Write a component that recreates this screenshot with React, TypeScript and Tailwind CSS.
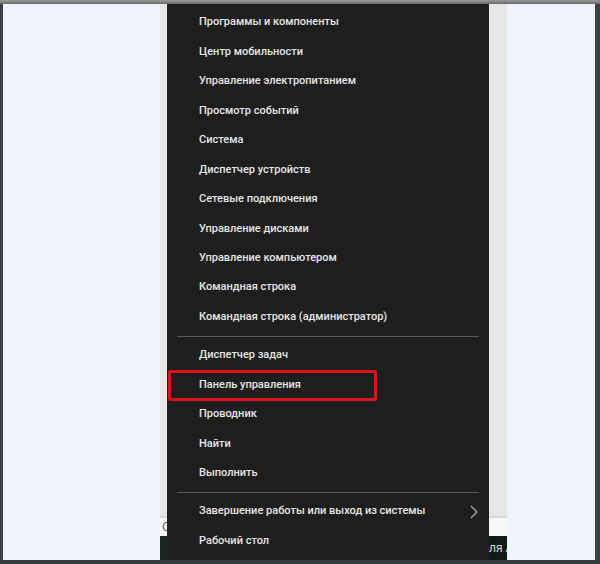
import React from "react";

const group1 = [
  "Программы и компоненты",
  "Центр мобильности",
  "Управление электропитанием",
  "Просмотр событий",
  "Система",
  "Диспетчер устройств",
  "Сетевые подключения",
  "Управление дисками",
  "Управление компьютером",
  "Командная строка",
  "Командная строка (администратор)",
];
const group2 = ["Диспетчер задач", "Панель управления", "Проводник", "Найти", "Выполнить"];

function Item({ label, highlight, chevron }: { label: string; highlight?: boolean; chevron?: boolean }) {
  return (
    <div className="relative h-[29.45px] flex items-center pl-[32px] pr-[10px] text-[11px] font-medium text-[#e6e6e6]">
      <span className="flex-1 whitespace-nowrap">{label}</span>
      {chevron && (
        <svg width="8" height="14" viewBox="0 0 8 14" className="mr-[1px]">
          <path d="M1 1 L7 7 L1 13" fill="none" stroke="#a8a8a8" strokeWidth="1.3" />
        </svg>
      )}
      {highlight && (
        <div className="absolute left-[1px] top-[0px] w-[209px] h-[31px] border-[3px] border-[#e0101c] rounded-[2px]" />
      )}
    </div>
  );
}

function Sep() {
  return <div className="h-[9px] flex items-center px-[10px]"><div className="h-px w-full bg-[#5a5a5a]" /></div>;
}

export default function App() {
  return (
    <div
      className="w-[600px] h-[564px] bg-[#3c3f42] flex flex-col"
      style={{ fontFamily: 'Roboto, "Noto Sans", sans-serif' }}
    >
      <div className="h-[4px] bg-gradient-to-b from-[#9a9a9a] to-[#6a6a6a]" />
      <div className="flex-1 flex min-h-0 pl-[3px] pr-[5px]">
        <div className="w-[157px] bg-[#eff4fc]" />
        <div className="w-[7px] flex flex-col">
          <div className="flex-1 bg-[#e6e6e6]" />
          <div className="h-[2px] bg-[#d8d8d8]" />
          <div className="h-[18px] bg-[#f7f7f7] text-[13px] leading-[18px] text-[#666] pl-[2px] overflow-hidden">C</div>
          <div className="h-[24px] bg-[#1a2622]" />
        </div>
        <div className="w-[322px] bg-[#1e1e1e] flex flex-col pt-[4px]">
          {group1.map((l) => <Item key={l} label={l} />)}
          <Sep />
          {group2.map((l) => <Item key={l} label={l} highlight={l === "Панель управления"} />)}
          <Sep />
          <Item label="Завершение работы или выход из системы" chevron />
          <Item label="Рабочий стол" />
        </div>
        <div className="w-[18px] flex flex-col">
          <div className="flex-1 bg-[#e6e6e6]" />
          <div className="h-[2px] bg-[#d8d8d8]" />
          <div className="h-[18px] bg-[#f7f7f7]" />
          <div className="h-[24px] bg-[#0f1916] text-[12px] leading-[24px] text-[#d8d8d8] whitespace-nowrap overflow-hidden">ля А</div>
        </div>
        <div className="flex-1 bg-[#eff4fc]" />
      </div>
      <div className="h-[4px] bg-[#34383b]" />
    </div>
  );
}
